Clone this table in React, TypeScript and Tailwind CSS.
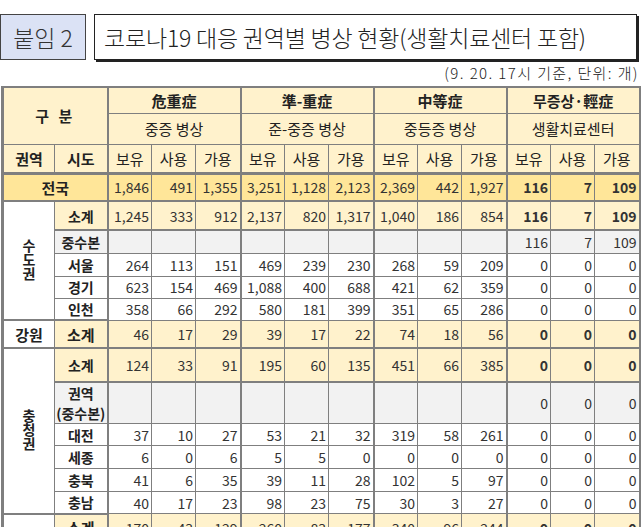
import clsx from 'clsx';

type Kind = 'total' | 'sub' | 'hq' | 'plain';

type Row = {
  sido: React.ReactNode;
  vals: (number | null)[];
  kind: Kind;
  h: string;
};

const B = 'border border-[#7f7f7f]';

const blank = [null, null, null, null, null, null, null, null, null];

const sudo: Row[] = [
  { sido: '소계', kind: 'sub', h: 'h-[29px]', vals: [1245, 333, 912, 2137, 820, 1317, 1040, 186, 854, 116, 7, 109] },
  { sido: '중수본', kind: 'hq', h: 'h-[23px]', vals: [...blank, 116, 7, 109] },
  { sido: '서울', kind: 'plain', h: 'h-[23px]', vals: [264, 113, 151, 469, 239, 230, 268, 59, 209, 0, 0, 0] },
  { sido: '경기', kind: 'plain', h: 'h-[22px]', vals: [623, 154, 469, 1088, 400, 688, 421, 62, 359, 0, 0, 0] },
  { sido: '인천', kind: 'plain', h: 'h-[22px]', vals: [358, 66, 292, 580, 181, 399, 351, 65, 286, 0, 0, 0] },
];

const chungcheong: Row[] = [
  { sido: '소계', kind: 'sub', h: 'h-[34px]', vals: [124, 33, 91, 195, 60, 135, 451, 66, 385, 0, 0, 0] },
  {
    sido: (
      <div className="flex flex-col items-center whitespace-nowrap text-[14px] leading-[20px]">
        <span>권역</span>
        <span>(중수본)</span>
      </div>
    ),
    kind: 'hq',
    h: 'h-[40px]',
    vals: [...blank, 0, 0, 0],
  },
  { sido: '대전', kind: 'plain', h: 'h-[22px]', vals: [37, 10, 27, 53, 21, 32, 319, 58, 261, 0, 0, 0] },
  { sido: '세종', kind: 'plain', h: 'h-[23px]', vals: [6, 0, 6, 5, 5, 0, 0, 0, 0, 0, 0, 0] },
  { sido: '충북', kind: 'plain', h: 'h-[23px]', vals: [41, 6, 35, 39, 11, 28, 102, 5, 97, 0, 0, 0] },
  { sido: '충남', kind: 'plain', h: 'h-[22px]', vals: [40, 17, 23, 98, 23, 75, 30, 3, 27, 0, 0, 0] },
];

const rowBg: Record<Kind, string> = {
  total: 'bg-[#ffe699]',
  sub: 'bg-[#fff2cc]',
  hq: 'bg-[#f2f2f2]',
  plain: 'bg-white',
};

function fmt(v: number | null) {
  return v === null ? '' : v.toLocaleString('en-US');
}

function NumCells({ vals, boldCenter }: { vals: (number | null)[]; boldCenter?: boolean }) {
  return (
    <>
      {vals.map((v, i) => (
        <td
          key={i}
          className={clsx(
            B,
            'pr-[2px] text-right text-[#333]',
            i % 3 === 0 && 'border-l-2',
            i === 11 && 'border-r-2',
            boldCenter && i >= 9 && 'font-bold text-[#111]'
          )}
        >
          {fmt(v)}
        </td>
      ))}
    </>
  );
}

function RegionRows({ name, rows }: { name: string; rows: Row[] }) {
  return (
    <>
      {rows.map((r, i) => (
        <tr key={i} className={clsx(r.h, rowBg[r.kind], r.kind === 'sub' && '[&>td]:border-b-2')}>
          {i === 0 && (
            <td rowSpan={rows.length} className={clsx(B, 'border-l-[3px] border-b-2 bg-white text-center font-bold')}>
              {/* region name runs top to bottom */}
              <span className="inline-block text-[14px] leading-none [writing-mode:vertical-lr]">{name}</span>
            </td>
          )}
          <td className={clsx(B, 'text-center font-bold', i === rows.length - 1 && 'border-b-2')}>{r.sido}</td>
          <NumCells vals={r.vals} boldCenter={r.kind === 'sub'} />
        </tr>
      ))}
    </>
  );
}

export default function App() {
  const groups = [
    { top: '危重症', sub: '중증 병상' },
    { top: '準-重症', sub: '준-중증 병상' },
    { top: '中等症', sub: '중등증 병상' },
    { top: '무증상·輕症', sub: '생활치료센터' },
  ];

  return (
    <div className="h-[527px] w-[643px] overflow-hidden bg-white font-['Noto_Sans_CJK_KR','Noto_Sans',sans-serif] text-[#222]">
      {/* Title boxes */}
      <div className="flex pt-[14px]">
        <div className="flex h-[46px] w-[86px] items-center justify-center border border-[#444] bg-[#dbe2f5] text-[23px] font-light text-[#333]">
          붙임 2
        </div>
        <div className="ml-[8px] flex h-[46px] w-[543px] items-center border border-[#222] pl-[9px] text-[23px] font-light tracking-[-0.2px] text-[#222] shadow-[2px_2px_0_#222]">
          코로나19 대응 권역별 병상 현황(생활치료센터 포함)
        </div>
      </div>

      <div className="mt-[3px] pr-[4px] text-right text-[15px] font-light leading-[20px] tracking-[1.4px] text-[#222]">
        (9. 20. 17시 기준, 단위: 개)
      </div>

      <table className="ml-[1px] mt-[3px] w-[637px] table-fixed border-collapse text-[14px] leading-none">
        <colgroup>
          <col className="w-[52px]" />
          <col className="w-[53px]" />
          {Array.from({ length: 12 }).map((_, i) => (
            <col key={i} className={i % 3 === 2 ? 'w-[45px]' : 'w-[44px]'} />
          ))}
        </colgroup>
        <thead className="bg-[#fff2cc] text-[15px]">
          <tr className="h-[26px]">
            <th colSpan={2} rowSpan={2} className={clsx(B, 'border-l-[3px] border-t-2 text-[15px] font-bold tracking-[3px]')}>
              구 분
            </th>
            {groups.map((g) => (
              <th key={g.top} colSpan={3} className={clsx(B, 'border-l-2 border-t-2 font-bold', g.top === '무증상·輕症' && 'border-r-2')}>
                {g.top}
              </th>
            ))}
          </tr>
          <tr className="h-[31px]">
            {groups.map((g) => (
              <th key={g.sub} colSpan={3} className={clsx(B, 'border-l-2 font-normal', g.sub === '생활치료센터' && 'border-r-2')}>
                {g.sub}
              </th>
            ))}
          </tr>
          <tr className="h-[29px] [&>th]:border-b-[3px]">
            <th className={clsx(B, 'border-l-[3px] font-bold')}>권역</th>
            <th className={clsx(B, 'font-bold')}>시도</th>
            {Array.from({ length: 12 }).map((_, i) => (
              <th key={i} className={clsx(B, 'font-normal', i % 3 === 0 && 'border-l-2', i === 11 && 'border-r-2')}>
                {['보유', '사용', '가용'][i % 3]}
              </th>
            ))}
          </tr>
        </thead>
        <tbody>
          <tr className="h-[28px] bg-[#ffe699] [&>td]:border-b-2">
            <td colSpan={2} className={clsx(B, 'border-l-[3px] text-center text-[15px] font-bold')}>
              전국
            </td>
            <NumCells vals={[1846, 491, 1355, 3251, 1128, 2123, 2369, 442, 1927, 116, 7, 109]} boldCenter />
          </tr>

          <RegionRows name="수도권" rows={sudo} />

          <tr className="h-[28px] bg-[#fff2cc] [&>td]:border-b-2">
            <td className={clsx(B, 'border-l-[3px] bg-white text-center text-[15px] font-bold')}>강원</td>
            <td className={clsx(B, 'text-center text-[15px] font-bold')}>소계</td>
            <NumCells vals={[46, 17, 29, 39, 17, 22, 74, 18, 56, 0, 0, 0]} boldCenter />
          </tr>

          <RegionRows name="충청권" rows={chungcheong} />

          <tr className="h-[28px] bg-[#fff2cc]">
            <td className={clsx(B, 'border-l-[3px] bg-white')} />
            <td className={clsx(B, 'text-center text-[15px] font-bold')}>소계</td>
            <NumCells vals={[170, 43, 129, 260, 83, 177, 340, 96, 244, 0, 0, 0]} boldCenter />
          </tr>
        </tbody>
      </table>
    </div>
  );
}
